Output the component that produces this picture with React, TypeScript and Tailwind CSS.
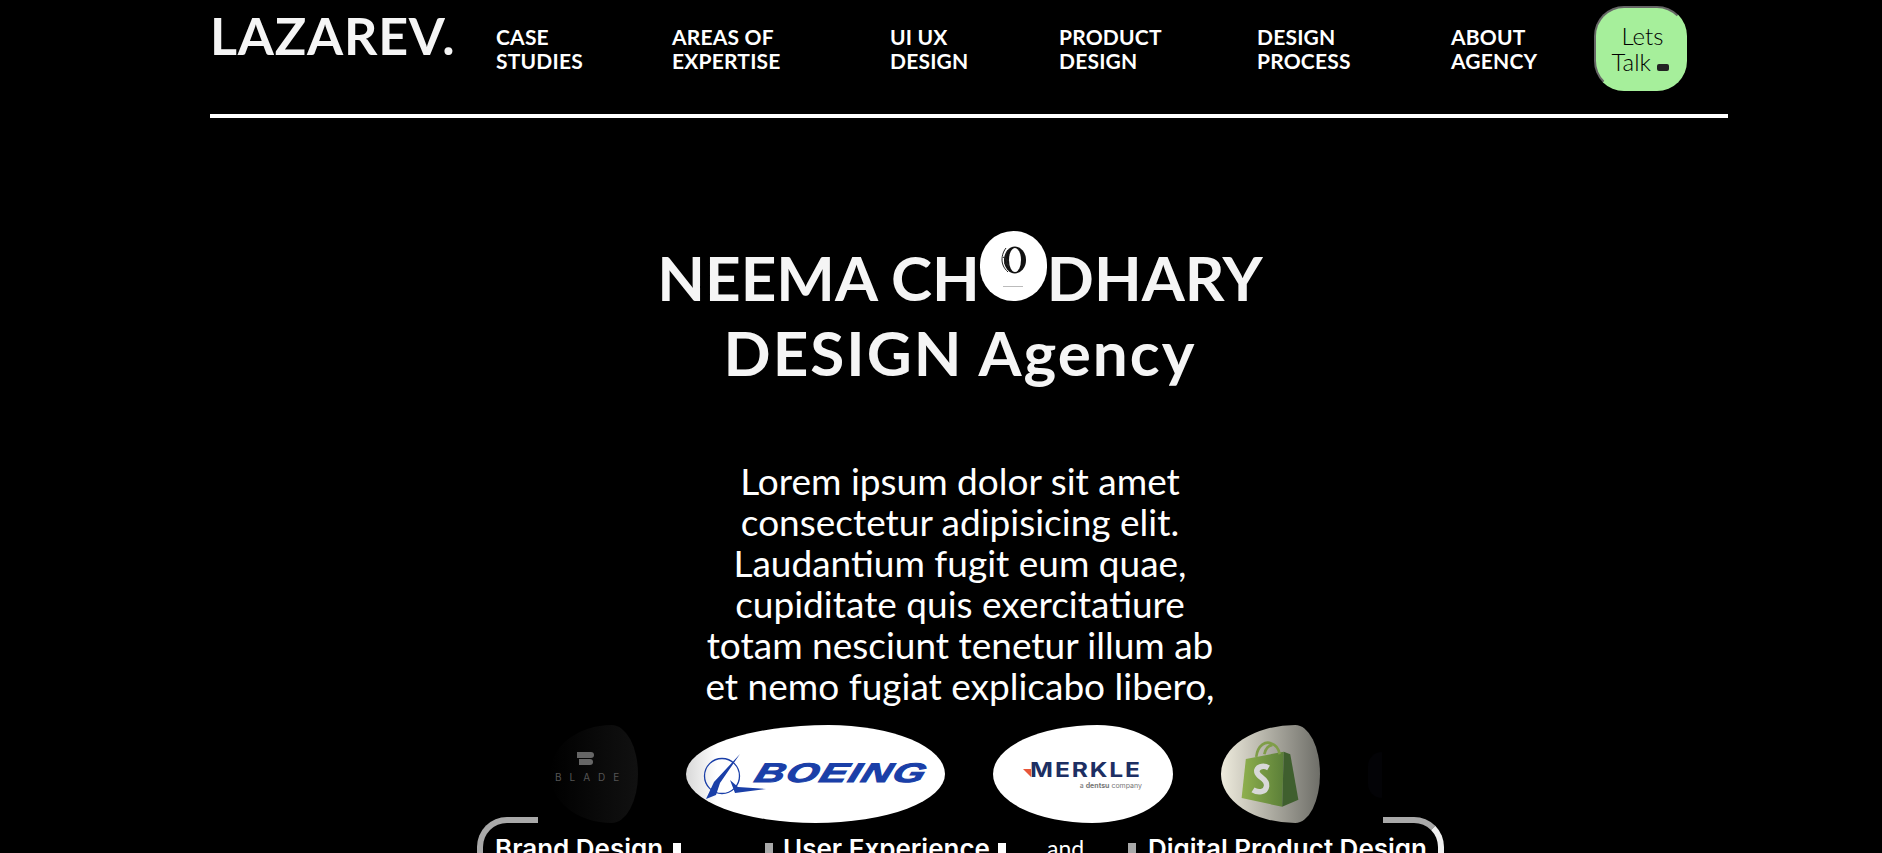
const navLinks = [
  { label: ["CASE", "STUDIES"], width: "w-[176px]" },
  { label: ["AREAS OF", "EXPERTISE"], width: "w-[218px]" },
  { label: ["UI UX", "DESIGN"], width: "w-[169px]" },
  { label: ["PRODUCT", "DESIGN"], width: "w-[198px]" },
  { label: ["DESIGN", "PROCESS"], width: "w-[194px]" },
  { label: ["ABOUT", "AGENCY"], width: "w-[143px]" },
];

const Header = () => {
  return (
    <header className="ml-[210px] w-[1518px] h-[118px] border-b-4 border-white flex items-start">
      <a className="block w-[286px] pt-[5px] text-[52px] leading-[60px] font-bold text-[#f5f5f5] tracking-[0.8px] whitespace-nowrap">
        LAZAREV.
      </a>
      <nav className="flex pt-[25px]">
        {navLinks.map((link) => (
          <a key={link.label[1]} className={`${link.width} block text-[21px] leading-[24px] font-bold tracking-[0.2px] text-white`}>
            {link.label[0]}
            <br />
            {link.label[1]}
          </a>
        ))}
      </nav>
      <button className="mt-[6px] w-[93px] h-[85px] rounded-[30px] bg-[#a6ef9b] border-2 border-t-[#666] border-l-[#666] border-r-[#a6ef9b] border-b-[#a6ef9b] text-[24px] leading-[26px] font-light text-black text-center whitespace-nowrap">
        <span className="ml-[4px]">Lets</span>
        <br />
        Talk <span className="inline-block w-[12px] h-[7px] rounded-[2px] bg-[#222]" />
      </button>
    </header>
  );
};

const BrandCircle = () => (
  <span className="inline-block overflow-hidden align-baseline w-[67px] h-[70px] rounded-full bg-white">
    <span className="flex flex-col items-center pt-[15px]">
      <svg viewBox="0 0 26 28" className="block ml-[2px] w-[26px] h-[28px]">
        <ellipse cx="14" cy="14" rx="11" ry="13.5" fill="#111" />
        <ellipse cx="14" cy="14" rx="6" ry="12" fill="#fff" />
        <path d="M5 2C1 7 0 14 2 19c1 3 3 5 5 7M7 4C4 9 4 15 8 21M2 11l6 4M3 17l5 2" fill="none" stroke="#222" strokeWidth="1" />
      </svg>
      <span className="block w-[20px] h-[1px] mt-[12px] bg-[#bbb]" />
    </span>
  </span>
);

const Hero = () => (
  <section className="flex flex-col items-center">
    <h1 className="mt-[113px] text-[62px] leading-[75px] font-bold text-[#f5f5f5] text-center whitespace-nowrap">
      NEEMA CH<BrandCircle />DHARY
      <br />
      <span className="tracking-[2px]">DESIGN Agency</span>
    </h1>
    <p className="mt-[70px] w-[560px] text-[37px] leading-[41px] font-normal text-white text-center whitespace-nowrap">
      Lorem ipsum dolor sit amet
      <br />
      consectetur adipisicing elit.
      <br />
      Laudantium fugit eum quae,
      <br />
      cupiditate quis exercitatiure
      <br />
      totam nesciunt tenetur illum ab
      <br />
      et nemo fugiat explicabo libero,
    </p>
  </section>
);

const Logos = () => (
  <div className="mt-[19px] ml-[550px] flex gap-12 h-[98px] relative z-10">
    <div className="w-[88px] h-[98px] rounded-[70%_30%_30%_70%/50%] bg-[linear-gradient(90deg,#000,#111)] flex flex-col items-start pl-[5px] pt-[27px]">
      <span className="block ml-[22px] w-[17px] h-[6px] rounded-r-[3px] bg-[#666]" />
      <span className="block ml-[24px] w-[14px] h-[6px] rounded-r-[3px] bg-[#666] mt-[1px]" />
      <span className="mt-[7px] text-[10px] leading-[10px] tracking-[8px] text-[#555] whitespace-nowrap [font-family:Inter,sans-serif]">
        BLADE
      </span>
    </div>
    <div className="w-[259px] h-[98px] overflow-hidden rounded-[55%_45%_50%_50%/50%] bg-[linear-gradient(90deg,#d8d8d8,#fff_12%)] flex items-center">
      <svg viewBox="0 0 70 55" className="shrink-0 ml-[14px] w-[70px] h-[55px]">
        <circle cx="22" cy="29" r="17.5" fill="none" stroke="#1a3fa8" strokeWidth="1.3" />
        <path d="M40 7L14 35 6 52 16 48 20 36z" fill="#1a3fa8" />
        <path d="M30 33L38 40 66 42 35 46z" fill="#1a3fa8" />
      </svg>
      <span className="ml-[-14px] mt-[-2px] text-[27px] leading-[30px] font-bold italic tracking-[1px] text-[#1a3fa8] [font-family:'Liberation_Sans',sans-serif] [-webkit-text-stroke:1px_#1a3fa8] scale-x-[1.52] -skew-x-12 origin-left whitespace-nowrap">
        BOEING
      </span>
    </div>
    <div className="w-[180px] h-[98px] rounded-[58%_42%_45%_55%/50%] bg-white flex flex-col items-end pt-[35px] pr-[31px]">
      <div className="flex items-end">
        <svg viewBox="0 0 8 8" className="mb-[3px] mr-[20px] w-[8px] h-[8px]">
          <path d="M0 0L8 0 8 8z" fill="#e8573a" />
        </svg>
        <span className="text-[20px] leading-[20px] font-bold tracking-[1.5px] text-[#1d2f63] [font-family:Inter,sans-serif] scale-x-[1.23] origin-right">
          MERKLE
        </span>
      </div>
      <span className="mt-[1px] text-[7px] leading-[9px] text-[#777] whitespace-nowrap [font-family:Inter,sans-serif]">
        a <b>dentsu</b> company
      </span>
    </div>
    <div className="w-[99px] h-[98px] rounded-[75%_25%_25%_75%/50%] bg-[linear-gradient(90deg,#eeebdd,#6e6e68)] flex items-center justify-center">
      <svg viewBox="90 60 185 205" className="w-[60px] h-[67px] ml-[-1px]">
        <defs>
          <linearGradient id="bag" x1="0" x2="1" y1="0" y2="0">
            <stop offset="0" stopColor="#8fb04e" />
            <stop offset="1" stopColor="#5b7f38" />
          </linearGradient>
        </defs>
        <path d="M108 115L225 92 220 262 95 235z" fill="url(#bag)" />
        <path d="M225 92L245 100 270 240 220 262z" fill="#3f5f2e" />
        <path d="M140 108C145 70 170 60 185 66c20 6 25 19 27 34M165 100c5-20 15-28 25-28" fill="none" stroke="#7f9d48" strokeWidth="8" />
        <path d="M178 142c-18-10-38-2-36 13 3 17 33 20 30 43-2 20-27 22-42 12" fill="none" stroke="#d8d8d8" strokeWidth="17" />
      </svg>
    </div>
    <div className="w-[14px] h-[46px] mt-[27px] rounded-l-full bg-[#030306]" />
  </div>
);

const Services = () => (
  <div className="relative ml-[477px] mt-[-6px] w-[967px] h-[36px]">
    <span className="absolute left-0 top-0 block w-[61px] h-[60px] rounded-tl-[30px] border-t-[6px] border-l-[6px] border-[#a9a9a9]" />
    <span className="absolute right-0 top-0 block w-[61px] h-[60px] rounded-tr-[30px] border-t-[6px] border-r-[6px] border-t-[#a9a9a9] border-r-[#f0f0f0]" />
    <div className="pl-[18px] pt-[17px] flex text-[26px] leading-[29px] font-semibold text-white whitespace-nowrap [font-family:Inter,sans-serif]">
      <span className="w-[178px]">Brand Design</span>
      <span className="mt-[9px] w-[8px] h-[24px] bg-white" />
      <span className="ml-[84px] mt-[9px] w-[8px] h-[24px] bg-[#a9a9a9]" />
      <span className="ml-[10px] w-[215px]">User Experience</span>
      <span className="mt-[9px] w-[8px] h-[24px] bg-white" />
      <span className="ml-[41px] w-[81px] font-normal text-[23px] [font-family:Lato,sans-serif]">and</span>
      <span className="mt-[9px] w-[8px] h-[24px] bg-[#a9a9a9]" />
      <span className="ml-[12px]">Digital Product Design</span>
    </div>
  </div>
);

export default function App() {
  return (
    <main className="h-[853px] overflow-hidden bg-black text-white [font-family:Lato,'Noto_Sans',sans-serif]">
      <div className="w-[1920px]">
        <Header />
        <Hero />
        <Logos />
        <Services />
      </div>
    </main>
  );
}
